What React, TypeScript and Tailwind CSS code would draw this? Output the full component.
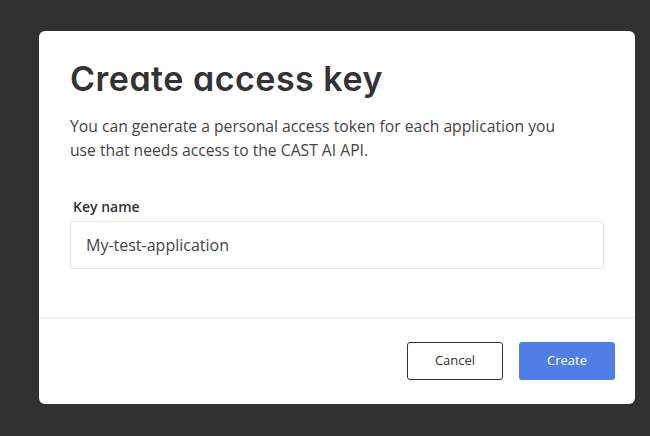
import React from "react";

export default function App() {
  return (
    <div className="w-[650px] h-[436px] bg-[#313131] relative overflow-hidden font-['Open_Sans',sans-serif]">
      <div className="absolute left-[39px] top-[31px] w-[596px] h-[373px] bg-white rounded-[6px] flex flex-col">
        <div className="px-[31px] pt-[26px] flex-1">
          <h1 className="font-['Inter',sans-serif] [font-feature-settings:'cv11'] text-[34px] leading-[44px] font-semibold text-[#333333] tracking-[0.5px]">
            Create access key
          </h1>
          <p className="mt-[13px] max-w-[500px] text-[15.7px] leading-[24px] text-[#444444]">
            You can generate a personal access token for each application you use that needs access to the CAST AI API.
          </p>
          <label className="block mt-[35px] pl-[3px] text-[14px] leading-[20px] font-semibold text-[#333333]">Key name</label>
          <div className="mt-[4px] h-[48px] border border-[#e6e6e6] rounded-[2px] flex items-center px-[15px] text-[16px] text-[#444444]">
            My-test-application
          </div>
        </div>
        <div className="h-[2px] bg-[#f2f2f2]" />
        <div className="flex justify-end gap-[16px] pr-[20px] pt-[23px] pb-[24px]">
          <button className="w-[96px] h-[38px] border border-[#333333] rounded-[3px] text-[13px] font-medium text-[#333333]">Cancel</button>
          <button className="w-[96px] h-[38px] bg-[#4f7fe6] rounded-[3px] text-[13px] font-medium text-white">Create</button>
        </div>
      </div>
    </div>
  );
}
